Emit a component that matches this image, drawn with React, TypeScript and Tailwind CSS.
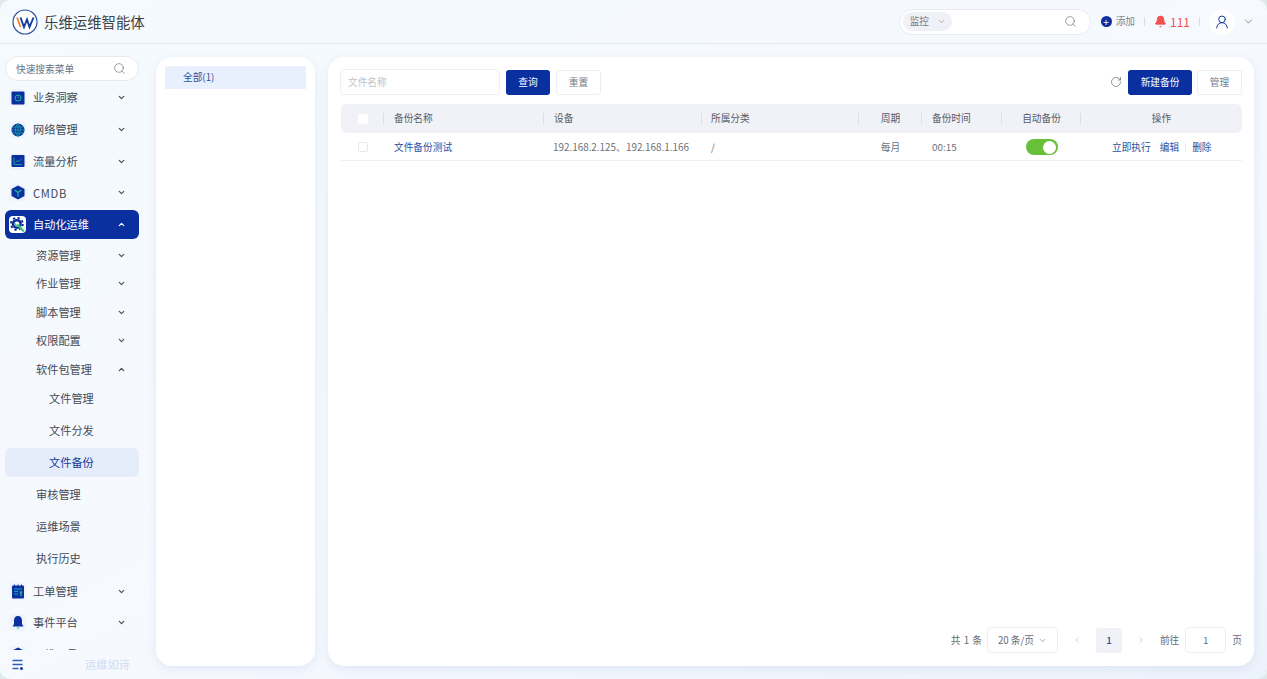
import { ReactNode } from "react"
import { ChevronDown, ChevronUp, ChevronLeft, ChevronRight, Search, RotateCw, UserRound, Bell } from "lucide-react"

const font = { fontFamily: '"Noto Sans CJK SC", "Noto Sans", sans-serif' }

function IconTile({ children }: { children: ReactNode }) {
  return <span className="flex h-[17px] w-[17px] shrink-0 items-center justify-center rounded-[4px] bg-[#eef3fd]">{children}</span>
}

const InsightIcon = () => (
  <svg width="14" height="14" viewBox="0 0 14 14">
    <rect x="0.5" y="0.5" width="13" height="13" rx="1" fill="#0a2f9e" />
    <circle cx="7" cy="7" r="3" fill="none" stroke="#18b7a0" strokeWidth="1" />
    <path d="M7 5.500V7" stroke="#18b7a0" strokeWidth="1" />
  </svg>
)
const GlobeIcon = () => (
  <svg width="14" height="14" viewBox="0 0 14 14">
    <circle cx="7" cy="7" r="6.500" fill="#0a3a9e" />
    <path d="M0.500 7h13M7 .5v13M1.500 4h11M1.500 10h11M7 .5C3.500 4 3.500 10 7 13.500M7 .5c3.500 3.500 3.500 9.500 0 13" fill="none" stroke="#1aa3a0" strokeWidth="0.700" />
  </svg>
)
const ChartIcon = () => (
  <svg width="14" height="14" viewBox="0 0 14 14">
    <rect x="0.500" y="1" width="13" height="12" rx="1" fill="#0a2f9e" />
    <path d="M3 3.500V10.500H11M4.500 8.500L6.500 6.500L8 7.500L10.500 5" fill="none" stroke="#18b7a0" strokeWidth="0.800" />
  </svg>
)
const CubeIcon = () => (
  <svg width="14" height="15" viewBox="0 0 14 15">
    <path d="M7 .5L13.500 4V11L7 14.500L.5 11V4Z" fill="#0a2f9e" />
    <path d="M3.500 5L7 7.500L10.500 5M7 7.500V11.500" fill="none" stroke="#19c29a" strokeWidth="1.200" />
  </svg>
)
const AutoIcon = () => (
  <svg width="15" height="15" viewBox="0 0 24 24">
    <circle cx="11" cy="11" r="8" fill="#0a2f9e" />
    <circle cx="11" cy="11" r="9.500" fill="none" stroke="#0a2f9e" strokeWidth="3" strokeDasharray="3.700 3.760" />
    <circle cx="11" cy="11" r="4" fill="#fff" />
    <path d="M13 13L21 22" stroke="#35c76f" strokeWidth="3.600" strokeLinecap="round" />
    <path d="M8.500 10a3.500 3.500 0 0 0 5.500 3.500" stroke="#35c76f" strokeWidth="2.400" fill="none" />
  </svg>
)
const TicketIcon = () => (
  <svg width="14" height="15" viewBox="0 0 14 15">
    <rect x="1" y="1.500" width="12" height="13" rx="1" fill="#0a2f9e" />
    <path d="M3.500 .5v2M7 .5v2M10.500 .5v2" stroke="#0a2f9e" strokeWidth="1" />
    <path d="M3 5h8M3 7.500h4M3 10h4" stroke="#19c2d0" strokeWidth="0.800" />
    <path d="M8.500 8h3M10 8v4" stroke="#2fd08a" strokeWidth="1.200" />
  </svg>
)
const BellIcon = () => (
  <svg width="14" height="15" viewBox="0 0 14 15">
    <path d="M7 1C4.500 1 3 3 3 5.500V9L1.500 11.500H12.500L11 9V5.500C11 3 9.500 1 7 1Z" fill="#0a2f9e" />
    <path d="M5.800 13h2.400" stroke="#19c29a" strokeWidth="1" />
  </svg>
)

function TopItem({ icon, label, wide }: { icon: ReactNode; label: string; wide?: boolean }) {
  return (
    <div className="flex h-[31.700px] w-[139px] shrink-0 items-center pl-[9px] pr-[13px] text-[#444a55]">
      <IconTile>{icon}</IconTile>
      <span className={`ml-[7px] flex-1 text-[11.200px] ${wide ? "tracking-[0.700px]" : ""}`}>{label}</span>
      <ChevronDown size={9} strokeWidth={3} />
    </div>
  )
}

function SubItem({ label, open }: { label: string; open?: boolean }) {
  return (
    <div className="flex h-[28.600px] w-[139px] shrink-0 items-center pl-[36px] pr-[13px] text-[11.200px] text-[#444a55]">
      <span className="flex-1">{label}</span>
      {open ? <ChevronUp size={9} strokeWidth={3} /> : <ChevronDown size={9} strokeWidth={3} />}
    </div>
  )
}

function LeafItem({ label, indent, active }: { label: string; indent?: boolean; active?: boolean }) {
  return (
    <div className={`flex h-[29px] shrink-0 items-center rounded-[6px] text-[11.200px] ${indent ? "pl-[44px]" : "pl-[31px]"} ${active ? "bg-[#e5edfb] text-[#123c9c]" : "text-[#444a55]"}`}>
      {label}
    </div>
  )
}

function Sidebar() {
  return (
    <aside className="flex w-[156px] shrink-0 flex-col pt-[12px]">
      <div className="ml-[5px] flex h-[25px] w-[134px] shrink-0 items-center justify-between rounded-full border border-[#e6e9f0] bg-white pl-[10px] pr-[12px] text-[9.700px] text-[#6d7280]">
        <span className="pt-[1px]">快速搜索菜单</span>
        <Search size={13} strokeWidth={1.300} className="text-[#777]" />
      </div>
      <div className="flex-1 overflow-hidden pt-[1px]">
        <TopItem icon={<InsightIcon />} label="业务洞察" />
        <TopItem icon={<GlobeIcon />} label="网络管理" />
        <TopItem icon={<ChartIcon />} label="流量分析" />
        <TopItem icon={<CubeIcon />} label="CMDB" wide />
        <div className="ml-[5px] mt-[1px] flex h-[29px] w-[134px] items-center rounded-[6px] bg-[#0a2f9e] pl-[4px] pr-[13px] text-white">
          <span className="flex h-[17px] w-[17px] items-center justify-center rounded-[4px] bg-white"><AutoIcon /></span>
          <span className="ml-[7px] flex-1 text-[11.200px]">自动化运维</span>
          <ChevronUp size={9} strokeWidth={3} />
        </div>
        <div className="mt-[2px]">
          <SubItem label="资源管理" />
          <SubItem label="作业管理" />
          <SubItem label="脚本管理" />
          <SubItem label="权限配置" />
          <SubItem label="软件包管理" open />
        </div>
        <div className="ml-[5px] flex w-[134px] flex-col gap-[3px]">
          <LeafItem label="文件管理" indent />
          <LeafItem label="文件分发" indent />
          <LeafItem label="文件备份" indent active />
          <LeafItem label="审核管理" />
          <LeafItem label="运维场景" />
          <LeafItem label="执行历史" />
        </div>
        <div className="mt-[2.500px]">
          <TopItem icon={<TicketIcon />} label="工单管理" />
          <TopItem icon={<BellIcon />} label="事件平台" />
          <TopItem icon={<CubeIcon />} label="运维工具" />
        </div>
      </div>
      <div className="flex h-[29px] shrink-0 items-center pl-[12px]">
        <svg width="13" height="12" viewBox="0 0 13 12">
          <path d="M0.500 1.500h10M0.500 5.500h10M0.500 9.500h6" stroke="#2f5fb8" strokeWidth="1.300" />
          <circle cx="9.500" cy="9.500" r="1.500" fill="#123c9c" />
        </svg>
        <span className="ml-[60px] text-[11.200px] text-[#cfdcf3]">运维如诗</span>
      </div>
    </aside>
  )
}

function Header() {
  return (
    <header className="flex h-[44px] shrink-0 items-center border-b border-[#e2e8ef] pl-[12px] pr-[12px]">
      <svg width="26" height="26" viewBox="0 0 26 26">
        <circle cx="13" cy="13" r="12" fill="#fff" stroke="#2c4f9e" strokeWidth="1.200" />
        <path d="M5 8.500L8.500 18" stroke="#ee7d31" strokeWidth="1.700" fill="none" />
        <path d="M8.500 8.500L12 18L15 10.500L17.500 18L21.500 8.500" stroke="#123c9c" strokeWidth="1.900" fill="none" />
      </svg>
      <span className="ml-[6px] text-[14.400px] text-[#3c4048]">乐维运维智能体</span>
      <div className="ml-auto flex h-[26px] w-[192px] items-center justify-between rounded-full border border-[#e8ecf2] bg-white pl-[3px] pr-[13px]">
        <span className="flex h-[19px] w-[49px] items-center gap-[8px] rounded-full bg-[#f0f1f6] pl-[7px] text-[9.700px] text-[#777c86]">
          监控
          <ChevronDown size={9} strokeWidth={1.500} />
        </span>
        <Search size={13} strokeWidth={1.300} className="text-[#777]" />
      </div>
      <span className="ml-[10px] flex h-[11px] w-[11px] items-center justify-center rounded-full bg-[#0a2f9e] text-[10px] leading-none text-white">+</span>
      <span className="ml-[4px] text-[9.700px] text-[#80858f]">添加</span>
      <span className="ml-[9px] h-[9px] w-px bg-[#d8dce3]" />
      <Bell size={13} fill="#f2514f" strokeWidth={1.500} className="ml-[9px] text-[#f2514f]" />
      <span className="ml-[3px] text-[12px] text-[#f2514f]">111</span>
      <span className="ml-[9px] h-[9px] w-px bg-[#d8dce3]" />
      <span className="ml-[9px] flex h-[26px] w-[26px] items-center justify-center rounded-full bg-white">
        <UserRound size={16} strokeWidth={1.500} className="text-[#123c9c]" />
      </span>
      <ChevronDown size={13} strokeWidth={1.500} className="ml-[7px] text-[#777]" />
    </header>
  )
}

const columns = "grid grid-cols-[43px_160px_158px_157px_63px_80px_79px_161px]"

function HeadCell({ children, center }: { children?: ReactNode; center?: boolean }) {
  return (
    <div className={`relative flex items-center text-[#555b66] ${center ? "justify-center" : "pl-[10px]"}`}>
      <span className="absolute right-0 top-[9px] h-[11px] w-px bg-[#dcdfe7]" />
      {children}
    </div>
  )
}

function BackupTable() {
  return (
    <div className="ml-px mt-[9px] text-[9.700px]">
      <div className={`${columns} h-[29px] rounded-[6px] bg-[#f1f2f7]`}>
        <HeadCell center><span className="h-[10px] w-[10px] rounded-[2px] bg-white" /></HeadCell>
        <HeadCell>备份名称</HeadCell>
        <HeadCell>设备</HeadCell>
        <HeadCell><span className="-ml-px">所属分类</span></HeadCell>
        <HeadCell center>周期</HeadCell>
        <HeadCell>备份时间</HeadCell>
        <HeadCell center>自动备份</HeadCell>
        <div className="flex items-center justify-center text-[#555b66]">操作</div>
      </div>
      <div className={`${columns} h-[28px] border-b border-[#f0f1f5] pt-[1px] text-[#6b7079]`}>
        <div className="flex items-center justify-center"><span className="h-[10px] w-[10px] rounded-[2px] border border-[#e6e8ee] bg-white" /></div>
        <div className="flex items-center pl-[10px] text-[#2a4f9f]">文件备份测试</div>
        <div className="flex items-center whitespace-nowrap pl-[9px] text-[9.900px]">192.168.2.125、192.168.1.166</div>
        <div className="flex items-center pl-[9px]">/</div>
        <div className="flex items-center justify-center">每月</div>
        <div className="flex items-center pl-[10px] text-[9.900px]">00:15</div>
        <div className="flex items-center justify-center">
          <span className="flex h-[16px] w-[32px] items-center justify-end rounded-full bg-[#67bf3a] pr-[2px]">
            <span className="h-[13px] w-[13px] rounded-full bg-white" />
          </span>
        </div>
        <div className="flex items-center pl-[31px] text-[#2a4f9f]">
          立即执行
          <span className="ml-[9px]">编辑</span>
          <span className="ml-[6px] h-[8px] w-px bg-[#e4e6ec]" />
          <span className="ml-[6px]">删除</span>
        </div>
      </div>
    </div>
  )
}

function Pagination() {
  return (
    <div className="flex items-center justify-end pb-[13px] pr-[12px] text-[9.700px] text-[#666b75]">
      <span className="[word-spacing:1px]">共 1 条</span>
      <span className="ml-[5px] flex h-[26px] w-[71px] items-center justify-center gap-[4px] rounded-[4px] border border-[#eceef3]">
        20 条/页
        <ChevronDown size={9} strokeWidth={1.500} />
      </span>
      <ChevronLeft size={10} strokeWidth={1.500} className="ml-[14px] text-[#b6bac3]" />
      <span className="ml-[14px] flex h-[25px] w-[26px] items-center justify-center rounded-[3px] bg-[#f0f2f8] font-medium text-[#2a4f9f]">1</span>
      <ChevronRight size={10} strokeWidth={1.500} className="ml-[14px] text-[#b6bac3]" />
      <span className="ml-[14px]">前往</span>
      <span className="ml-[6px] flex h-[26px] w-[41px] items-center justify-center rounded-[4px] border border-[#eceef3]">1</span>
      <span className="ml-[6px]">页</span>
    </div>
  )
}

function MainPanel() {
  return (
    <section className="ml-[13px] flex w-[926px] flex-col justify-between rounded-[16px] bg-white shadow-[0_3px_10px_rgba(90,120,180,0.12)]">
      <div className="pl-[12px] pr-[12px] pt-[12px]">
        <div className="flex h-[26px] items-center text-[9.700px]">
          <div className="flex h-[26px] w-[160px] items-center rounded-[4px] border border-[#eceef3] pl-[7px] text-[#c0c3ca]">文件名称</div>
          <button className="ml-[6px] h-[25px] w-[44px] rounded-[3px] bg-[#0a2f9e] text-white">查询</button>
          <button className="ml-[6px] h-[25px] w-[45px] rounded-[3px] border border-[#eceef3] text-[#777c86]">重置</button>
          <RotateCw size={12} strokeWidth={1.200} className="ml-auto text-[#555]" />
          <button className="ml-[6px] h-[25px] w-[64px] rounded-[3px] bg-[#0a2f9e] text-white">新建备份</button>
          <button className="ml-[5px] h-[25px] w-[45px] rounded-[3px] border border-[#eceef3] text-[#777c86]">管理</button>
        </div>
        <BackupTable />
      </div>
      <Pagination />
    </section>
  )
}

export default function App() {
  return (
    <div style={font} className="h-[679px] w-[1267px] overflow-hidden bg-[#dfe9ea]">
      <div className="flex h-full flex-col overflow-hidden rounded-[10px] bg-gradient-to-br from-[#f4fafd] via-[#f6f9fe] to-[#edf3fc]">
        <Header />
        <div className="flex min-h-0 flex-1">
          <Sidebar />
          <div className="flex flex-1 py-[13px]">
            <section className="w-[159px] rounded-[16px] bg-white p-[9px] shadow-[0_3px_10px_rgba(90,120,180,0.12)]">
              <div className="flex h-[23px] items-center bg-[#e8f0fd] pl-[18px] text-[9.700px] text-[#2a4f9f]">全部(1)</div>
            </section>
            <MainPanel />
          </div>
        </div>
      </div>
    </div>
  )
}
